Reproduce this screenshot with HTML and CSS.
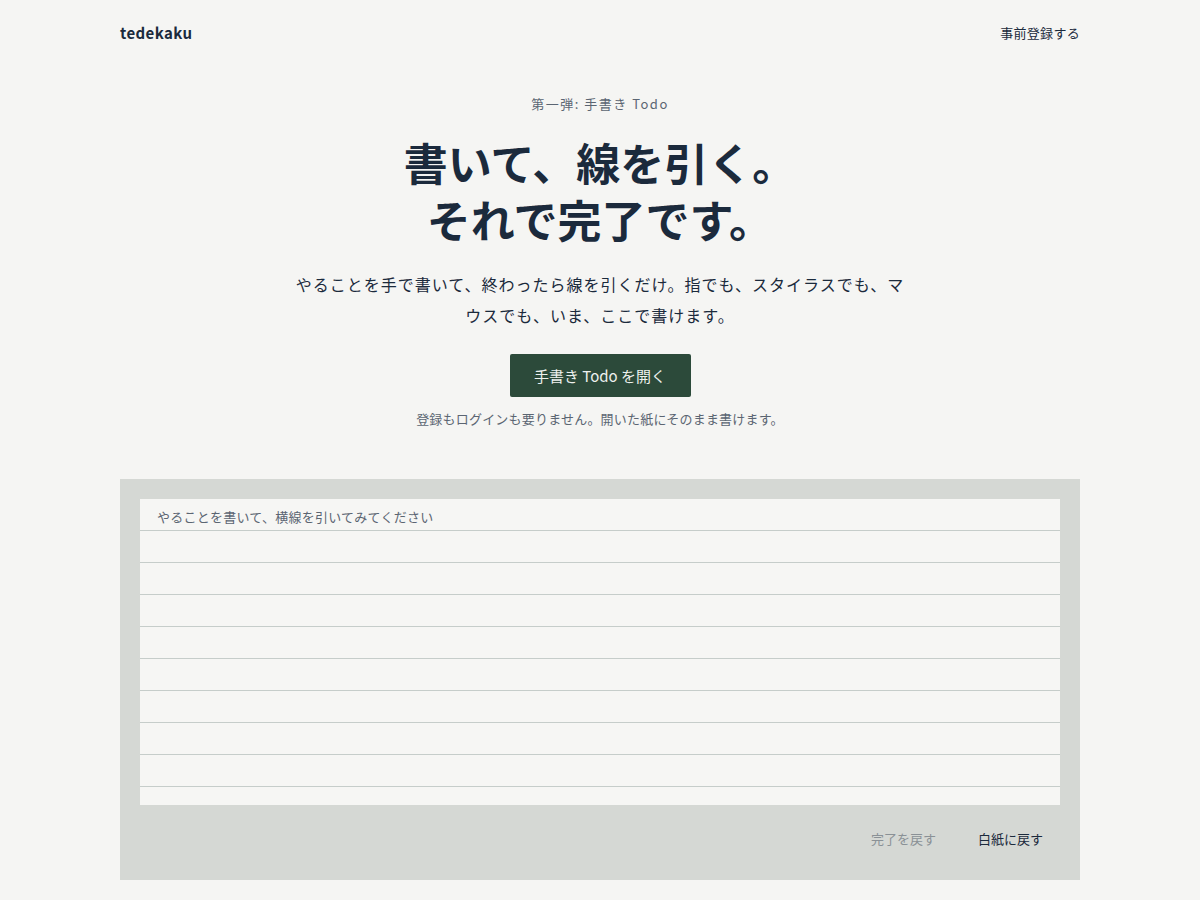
FILE: index.html
```html
<!DOCTYPE html>
<html lang="ja">
<head>
<meta charset="utf-8">
<title>tedekaku</title>
<link rel="stylesheet" href="styles.css">
</head>
<body>
<div class="wrap">
  <header class="header">
    <div class="logo">tedekaku</div>
    <a class="pre" href="#">事前登録する</a>
  </header>
  <section class="hero">
    <p class="eyebrow">第一弾: 手書き Todo</p>
    <h1 class="title"><span class="line">書いて、線を引く。</span><span class="line">それで完了です。</span></h1>
    <p class="lead">やることを手で書いて、終わったら線を引くだけ。指でも、スタイラスでも、マウスでも、いま、ここで書けます。</p>
    <a class="cta" href="#">手書き Todo を開く</a>
    <p class="note">登録もログインも要りません。開いた紙にそのまま書けます。</p>
  </section>
  <section class="board">
    <div class="paper">
      <div class="placeholder">やることを書いて、横線を引いてみてください</div>
    </div>
    <div class="actions">
      <button class="btn muted">完了を戻す</button>
      <button class="btn">白紙に戻す</button>
    </div>
  </section>
</div>
</body>
</html>
```

FILE: styles.css
```css
* { box-sizing: border-box; }
html, body { margin: 0; padding: 0; }
body {
  background: #f5f5f3;
  color: #1b2a3c;
  font-family: "Noto Sans CJK JP", "Noto Sans", sans-serif;
}
.wrap {
  width: 960px;
  margin: 0 auto;
}
.header {
  display: flex;
  justify-content: space-between;
  align-items: center;
  height: 64px;
}
.logo {
  font-family: "Noto Sans CJK JP", "Noto Sans", sans-serif;
  font-weight: 700;
  font-size: 15px;
  letter-spacing: 0.4px;
  color: #1b2a3c;
}
.pre {
  font-size: 13px;
  color: #1b2a3c;
  text-decoration: none;
  letter-spacing: 0.3px;
}
.hero {
  display: flex;
  flex-direction: column;
  align-items: center;
  text-align: center;
  padding-top: 30px;
}
.eyebrow {
  margin: 0;
  font-size: 13px;
  line-height: 20px;
  letter-spacing: 1.5px;
  color: #5b6572;
}
.title {
  margin: 20px 0 0;
  display: flex;
  flex-direction: column;
  align-items: center;
  font-size: 44px;
  line-height: 57px;
  font-weight: 700;
  color: #1b2a3c;
}
.line {
  display: block;
  height: 57px;
}
.lead {
  margin: 21px 0 0;
  max-width: 624px;
  font-size: 16px;
  line-height: 31px;
  letter-spacing: 1px;
  color: #1b2a3c;
}
.cta {
  margin-top: 23px;
  display: inline-flex;
  align-items: center;
  justify-content: center;
  width: 181px;
  height: 43px;
  background: #2c4a3a;
  color: #eef1ee;
  font-size: 15px;
  text-decoration: none;
  border-radius: 2px;
}
.note {
  margin: 12px 0 0;
  font-size: 13px;
  line-height: 20px;
  letter-spacing: 0.2px;
  color: #5b6572;
}
.board {
  margin-top: 50px;
  background: #d5d8d4;
  padding: 20px 20px 0;
  height: 401px;
}
.paper {
  height: 306px;
  background-color: #f6f6f4;
  background-image: repeating-linear-gradient(to bottom, transparent 0, transparent 31px, #c6cdca 31px, #c6cdca 32px);
  padding: 8px 17px 0;
}
.placeholder {
  font-size: 13px;
  line-height: 20px;
  letter-spacing: 0.25px;
  color: #5b6572;
}
.actions {
  display: flex;
  justify-content: flex-end;
  gap: 10px;
  padding-top: 22px;
  padding-right: 1px;
}
.btn {
  background: none;
  border: none;
  font-family: inherit;
  font-size: 13px;
  line-height: 20px;
  padding: 2px 16px;
  color: #1b2a3c;
  cursor: pointer;
}
.btn.muted {
  color: #8a9196;
}
```
